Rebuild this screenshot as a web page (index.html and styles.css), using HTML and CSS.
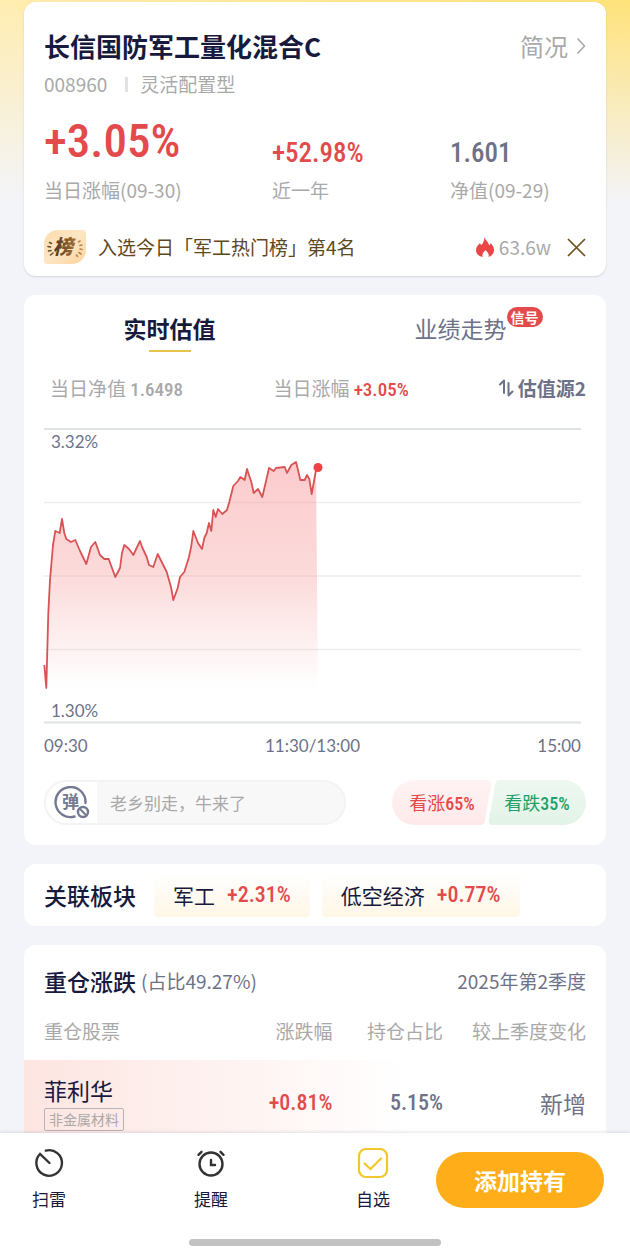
FILE: index.html
```html
<!DOCTYPE html>
<html lang="zh-CN">
<head>
<meta charset="utf-8">
<meta name="viewport" content="width=device-width, initial-scale=1">
<title>长信国防军工量化混合C</title>
<link rel="stylesheet" href="styles.css">
</head>
<body>
<div class="app">
  <main class="content">
    <section class="card summary">
      <div class="summary-head">
        <h1 class="fund-name">长信国防军工量化混合C</h1>
        <a class="profile-link" href="#profile">简况
          <svg width="10" height="18" viewBox="0 0 10 18" fill="none" stroke="currentColor" stroke-width="1.6" aria-hidden="true"><path d="M1.500 1.500 L8.500 9 L1.500 16.500"/></svg>
        </a>
      </div>
      <p class="fund-meta"><span>008960</span><span class="divider"></span><span>灵活配置型</span></p>
      <dl class="stats">
        <div class="stat"><dt>当日涨幅(09-30)</dt><dd class="num stat-big up">+3.05%</dd></div>
        <div class="stat"><dt>近一年</dt><dd class="num up">+52.98%</dd></div>
        <div class="stat"><dt>净值(09-29)</dt><dd class="num slate">1.601</dd></div>
      </dl>
      <div class="rank">
        <svg class="rank-badge" width="42" height="34" viewBox="0 0 42 34" aria-hidden="true">
          <defs><linearGradient id="badge" x1="0" y1="0" x2="1" y2="1"><stop offset="0" stop-color="#fbdcb0"/><stop offset=".5" stop-color="#fde6c4"/><stop offset="1" stop-color="#fad39c"/></linearGradient>
          <linearGradient id="ink" x1="0" y1="0" x2="1" y2="0"><stop offset="0" stop-color="#49351f"/><stop offset="1" stop-color="#a87032"/></linearGradient></defs>
          <path d="M14 0H39a3 3 0 0 1 3 3V20a14 14 0 0 1-14 14H3a3 3 0 0 1-3-3V14A14 14 0 0 1 14 0Z" fill="url(#badge)"/>
          <g fill="none" stroke-width="1.600" stroke-linecap="round">
            <path stroke="#6b4d2b" d="M5.500 12.500l2 1M4 16.500l2.500.5M4.500 21l2.500-.5M6.500 25l2.500-2"/>
            <path stroke="#b98850" d="M34.500 12l1.500-1M36 15.500l2-.5M36 19l2 .5M35 22.500l2 1.500M32.500 25l1 1.500"/>
          </g>
          <text class="badge-text" x="9" y="24" fill="url(#ink)">榜</text>
        </svg>
        <a class="rank-text" href="#rank">入选今日「军工热门榜」第4名</a>
        <span class="heat">
          <svg width="18" height="20" viewBox="0 0 18 20" aria-hidden="true"><path fill="#ec4545" d="M8.200 0C9 3 13 5 13 8.500c.8-.4 1.300-1.200 1.500-2.200C16.500 8 18 10.200 18 13c0 3.300-2.200 6-5.500 7 .8-2.600-.3-4.700-3.200-6.800-2.300 2.100-3.500 4.300-2.600 6.800C3 19.300 0 16.800 0 13.200c0-3.300 2.300-5 4-7.100.3.900.6 1.600 1.200 2C7.500 6 8.500 3.500 8.200 0Z"/></svg>
          63.6w
        </span>
        <button class="icon-button" type="button" aria-label="关闭">
          <svg width="19" height="19" viewBox="0 0 19 19" fill="none" stroke="#6f5220" stroke-width="1.700" aria-hidden="true"><path d="M1 1L18 18M18 1L1 18"/></svg>
        </button>
      </div>
    </section>

    <section class="card valuation">
      <div class="tabs" role="tablist">
        <button class="tab tab-active" type="button" role="tab" aria-selected="true">实时估值</button>
        <button class="tab" type="button" role="tab" aria-selected="false"><span class="tab-label">业绩走势<span class="signal">信号</span></span></button>
      </div>
      <div class="quote">
        <span>当日净值 <b class="num">1.6498</b></span>
        <span>当日涨幅 <b class="num up">+3.05%</b></span>
        <button class="source" type="button">
          <svg width="15" height="18" viewBox="0 0 15 18" fill="none" stroke="currentColor" stroke-width="2" stroke-linecap="round" stroke-linejoin="round" aria-hidden="true"><path d="M1 5.500L5 1.500V14M9.500 4V16.500L13.500 12.500"/></svg>估值源2</button>
      </div>
      <div class="chart">
        <div class="plot">
          <svg class="plot-svg" viewBox="44 429 537 294" role="img" aria-label="实时估值走势">
            <defs><linearGradient id="area" gradientUnits="userSpaceOnUse" x1="0" y1="462" x2="0" y2="688"><stop offset="0" stop-color="#f98d90" stop-opacity=".46"/><stop offset=".5" stop-color="#f7a3a3" stop-opacity=".4"/><stop offset="1" stop-color="#f7a3a3" stop-opacity="0"/></linearGradient></defs>
            <path fill="none" stroke="#eceeee" stroke-width="1.500" d="M44 502.500H581M44 576H581M44 649.500H581"/>
            <path fill="none" stroke="#dfe3e3" stroke-width="2" d="M44 429H581M44 722.500H581"/>
            <path fill="url(#area)" d="M44.300 665L46.300 688L48.300 613L50 580L53 545L55.300 531L59.700 533L62 519L64.300 533L66.300 539L71 542L75.300 540L80 551L86.300 564L91 547L95.300 542L100 555L104.300 559L108.700 559L115.300 577L120 568L122 553L124.300 545L129 549L133.300 555L140 541L142 547L146.700 557L149 565L153.300 567L157.700 554L166.700 572L171 587L173.300 600L177.700 588L180 577L184.300 572L189 557L191.300 546L193.300 531L198 543L202 549L204.300 538L206.700 533L209 523L211.300 531L213.300 510L215.700 517L218 509L222.300 514L227 510L229.300 502L233.300 486L238 481L240.300 477L244.700 480L247 469L251.300 482L253.700 493L258 489L262.300 497L267 477L269 468L273.700 471L276 468L284.700 467L287 473L291.300 465L296 462L298 470L300.300 480L304.700 480L307 475L309.300 479L311.700 494L316 470L318 688H46Z"/>
            <path fill="none" stroke="#d95355" stroke-width="1.800" stroke-linejoin="round" d="M44.300 665L46.300 688L48.300 613L50 580L53 545L55.300 531L59.700 533L62 519L64.300 533L66.300 539L71 542L75.300 540L80 551L86.300 564L91 547L95.300 542L100 555L104.300 559L108.700 559L115.300 577L120 568L122 553L124.300 545L129 549L133.300 555L140 541L142 547L146.700 557L149 565L153.300 567L157.700 554L166.700 572L171 587L173.300 600L177.700 588L180 577L184.300 572L189 557L191.300 546L193.300 531L198 543L202 549L204.300 538L206.700 533L209 523L211.300 531L213.300 510L215.700 517L218 509L222.300 514L227 510L229.300 502L233.300 486L238 481L240.300 477L244.700 480L247 469L251.300 482L253.700 493L258 489L262.300 497L267 477L269 468L273.700 471L276 468L284.700 467L287 473L291.300 465L296 462L298 470L300.300 480L304.700 480L307 475L309.300 479L311.700 494L316 470L318 468"/>
            <circle cx="318" cy="467.500" r="4.500" fill="#ee4446"/>
          </svg>
          <span class="scale scale-top">3.32%</span>
          <span class="scale scale-bottom">1.30%</span>
        </div>
        <div class="times"><span>09:30</span><span>11:30/13:00</span><span>15:00</span></div>
      </div>
      <div class="actions">
        <div class="comment">
          <button class="comment-toggle" type="button" aria-label="关闭弹幕">
            <svg width="36" height="34" viewBox="0 0 36 34" fill="none" stroke="#737990" aria-hidden="true">
              <path stroke-width="2.400" stroke-linecap="round" d="M20.500 30.500A15 15 0 1 1 31.500 17"/>
              <text class="toggle-text" x="8" y="22" fill="#737990" stroke="none">弹</text>
              <circle cx="29" cy="26" r="5" stroke-width="2.400"/><path stroke-width="2" d="M26 23L32 29"/>
            </svg>
          </button>
          <input class="comment-input" type="text" aria-label="发弹幕" placeholder="老乡别走，牛来了">
        </div>
        <div class="vote">
          <button class="vote-up" type="button">看涨<b class="num">65%</b></button>
          <button class="vote-down" type="button">看跌<b class="num">35%</b></button>
        </div>
      </div>
    </section>

    <section class="card sectors">
      <h2 class="heading">关联板块</h2>
      <a class="chip" href="#defence">军工<b class="num up">+2.31%</b></a>
      <a class="chip" href="#low-altitude">低空经济<b class="num up">+0.77%</b></a>
    </section>

    <section class="card holdings">
      <div class="holdings-head">
        <h2 class="heading">重仓涨跌</h2><span class="share">(占比49.27%)</span><span class="quarter">2025年第2季度</span>
      </div>
      <table class="table">
        <thead><tr><th class="c-name">重仓股票</th><th class="c-change">涨跌幅</th><th class="c-share">持仓占比</th><th class="c-diff">较上季度变化</th></tr></thead>
        <tbody><tr>
          <td class="c-name"><div class="stock">菲利华</div><span class="tag">非金属材料</span></td>
          <td class="num up">+0.81%</td><td class="num slate">5.15%</td><td class="c-diff slate">新增</td>
        </tr></tbody>
      </table>
    </section>
  </main>

  <footer class="bottom">
    <div class="bar">
      <nav class="nav">
        <button class="nav-item" type="button">
          <svg width="32" height="32" viewBox="0 0 32 32" fill="none" stroke="#333" stroke-width="2.400" stroke-linecap="round" aria-hidden="true"><path d="M12.800 3.600A12.800 12.800 0 1 1 7 7L16.500 16"/></svg>扫雷</button>
        <button class="nav-item" type="button">
          <svg width="32" height="32" viewBox="0 0 32 32" fill="none" stroke="#333" stroke-width="2.400" stroke-linecap="round" aria-hidden="true"><circle cx="16" cy="17" r="11.500"/><path d="M16 13V18H20M3.500 7.800L6.500 4.800M28.500 7.800L25.500 4.800"/></svg>提醒</button>
        <button class="nav-item" type="button">
          <svg width="32" height="32" viewBox="0 0 32 32" fill="none" stroke="#f2c72c" stroke-width="2.200" stroke-linecap="round" aria-hidden="true"><rect x="2" y="2" width="28" height="28" rx="7"/><path d="M7.500 16.500L13.500 22L24 11.500"/></svg>自选</button>
      </nav>
      <button class="primary" type="button">添加持有</button>
    </div>
    <div class="home-indicator"></div>
  </footer>
</div>
</body>
</html>
```
FILE: styles.css
```css
* { box-sizing: border-box; }

body {
  margin: 0;
  color: #171a3d;
  background: #f3f4fa;
  font-family: "Noto Sans CJK SC", sans-serif;
  font-size: 19px;
  line-height: 28px;
}

h1, h2, p, dl, dd { margin: 0; }
a { color: inherit; text-decoration: none; }
svg { flex: none; }

button, input {
  padding: 0;
  border: 0;
  color: inherit;
  background: none;
  font: inherit;
}

.num {
  font-family: "Roboto Condensed", "Liberation Sans Narrow", "Noto Sans CJK SC", sans-serif;
  font-weight: 500;
}

.up { color: #e34a4c; }
.slate { color: #6d7288; }

.app {
  display: flex;
  flex-direction: column;
  height: 100vh;
}

.content {
  flex: 1;
  min-height: 0;
  padding: 2px 24px 0;
  overflow: hidden;
  background:
    linear-gradient(to bottom, rgba(243, 244, 250, 0), #f3f4fa 205px),
    linear-gradient(to right, #ffedb0, #ffe27a);
}

.card {
  margin-bottom: 19px;
  border-radius: 12px;
  background: #fff;
}

/* Fund summary */
.summary {
  padding: 22px 20px 12px;
  box-shadow: 0 1px 2px rgba(40, 40, 80, 0.16);
}

.summary-head {
  display: flex;
  align-items: center;
  justify-content: space-between;
}

.fund-name {
  font-size: 26px;
  font-weight: 700;
  line-height: 44px;
}

.profile-link {
  display: flex;
  align-items: center;
  gap: 8px;
  color: #a9a9a9;
  font-size: 24px;
}

.fund-meta {
  display: flex;
  align-items: center;
  color: #a9a9a9;
  line-height: 32px;
}

.divider {
  width: 3px;
  height: 15px;
  margin: 0 12px 0 18px;
  background: #e2e2e2;
}

.stats {
  display: grid;
  grid-template-columns: 228fr 178fr 136fr;
  margin-top: 15px;
}

.stat {
  display: flex;
  flex-direction: column-reverse;
  gap: 9px;
}

.stat dt { color: #a9a9a9; }
.stat dd { font-size: 27px; line-height: 28px; }
.stat .stat-big { font-size: 47px; line-height: 52px; }

.rank {
  display: flex;
  align-items: center;
  margin-top: 26px;
}

.badge-text { font-size: 20px; font-weight: 900; font-style: italic; }

.rank-text {
  margin-left: 12px;
  color: #60471c;
}

.heat {
  display: flex;
  align-items: center;
  gap: 5px;
  margin-left: auto;
  color: #a9a9a9;
}

.icon-button {
  display: flex;
  margin-left: 16px;
}

/* Valuation */
.valuation { padding: 16px 0 20px; }

.tabs {
  display: grid;
  grid-template-columns: 1fr 1fr;
}

.tab {
  display: flex;
  flex-direction: column;
  align-items: center;
  gap: 5px;
  height: 41px;
  color: #6d7288;
  font-size: 23px;
  line-height: 34px;
}

.tab-active {
  color: #171a3d;
  font-weight: 700;
}

.tab-active::after {
  width: 42px;
  height: 2px;
  background: #e8c24a;
  content: "";
}

.tab-label { position: relative; }

.signal {
  position: absolute;
  top: -4px;
  left: 100%;
  padding: 0 4px;
  border-radius: 10px;
  color: #fff;
  background: #e34a4c;
  font-size: 14px;
  font-weight: 700;
  line-height: 20px;
  white-space: nowrap;
}

.quote {
  display: grid;
  grid-template-columns: 223fr 225fr auto;
  margin: 22px 20px 0 26px;
  color: #a9a9a9;
}

.quote .num { line-height: 20px; }

.source {
  display: flex;
  align-items: center;
  gap: 4px;
  height: 28px;
  color: #6d7288;
  font-weight: 700;
}

.chart {
  margin: 27px 25px 0 20px;
  color: #6d7288;
  font-family: Lato, sans-serif;
  font-size: 17px;
}

.plot { position: relative; }
.plot-svg { display: block; width: 100%; overflow: visible; }

.scale {
  position: absolute;
  left: 7px;
  line-height: 24px;
}

.scale-top { top: 1px; }
.scale-bottom { bottom: 0; }

.times {
  display: flex;
  justify-content: space-between;
  margin-top: 10px;
  line-height: 26px;
}

.actions {
  display: flex;
  justify-content: space-between;
  height: 45px;
  margin: 21px 20px 0;
}

.comment {
  display: flex;
  flex: 0 1 302px;
  overflow: hidden;
  border: 2px solid #f3f3f3;
  border-radius: 23px;
  background: #f8f8f8;
}

.comment-toggle {
  display: flex;
  flex: none;
  align-items: center;
  justify-content: center;
  width: 51px;
  background: #fff;
}

.toggle-text { font-size: 17px; font-weight: 700; }

.comment-input {
  flex: 1;
  min-width: 0;
  padding: 0 13px;
  font-size: 17px;
}

.comment-input::placeholder { color: #a9a9a9; opacity: 1; }

.vote {
  display: grid;
  grid-template-columns: 96px 94px;
  gap: 4px;
  overflow: hidden;
  border-radius: 23px;
  font-size: 18px;
}

.vote button {
  position: relative;
  isolation: isolate;
  white-space: nowrap;
}

.vote button::before {
  position: absolute;
  inset: 0;
  z-index: -1;
  border-radius: 4px;
  transform: skewX(-10deg);
  content: "";
}

.vote .vote-up { padding-left: 4px; color: #e34a4c; }
.vote .vote-down { padding-right: 4px; color: #23a068; }
.vote .vote-up::before { left: -24px; background: linear-gradient(#fff3f3, #fee9ea); }
.vote .vote-down::before { right: -24px; background: linear-gradient(#eef8f1, #e3f3e7); }

/* Related sectors */
.sectors {
  display: flex;
  align-items: center;
  gap: 12px;
  height: 62px;
  padding: 0 20px;
}

.heading {
  font-size: 23px;
  font-weight: 500;
  line-height: 32px;
  white-space: nowrap;
}

.chip {
  display: flex;
  align-items: center;
  gap: 12px;
  height: 44px;
  padding: 0 19px;
  border-radius: 4px;
  background: linear-gradient(#fff, #fff6e6);
  font-size: 21px;
  white-space: nowrap;
}

.chip .num { font-size: 22px; }
.heading + .chip { margin-left: 6px; }

/* Holdings */
.holdings { padding-top: 20px; }

.holdings-head {
  display: flex;
  align-items: center;
  gap: 5px;
  padding: 0 20px;
  color: #6d7288;
}

.holdings-head .heading { color: #171a3d; }
.quarter { margin-left: auto; }

.table {
  width: 100%;
  margin-top: 5px;
  border-collapse: collapse;
  table-layout: fixed;
  text-align: right;
}

.table th {
  height: 58px;
  padding: 0;
  color: #a9a9a9;
  font-weight: 400;
}

.table td { padding: 14px 0; font-size: 23px; }
.table td.num { font-size: 22px; }
.table .c-name { width: 35%; padding-left: 20px; text-align: left; }
.table .c-diff { width: 28%; padding-right: 20px; }
.c-share { width: 19%; }
.table tbody tr { background: linear-gradient(to right, #fde5e1, #fff 66%); }
.stock { line-height: 32px; }

.tag {
  display: block;
  width: max-content;
  margin-top: 2px;
  padding: 0 4px;
  border: 1px solid #b9b3b5;
  border-radius: 2px;
  color: #a9a9a9;
  font-size: 14px;
  line-height: 21px;
}

/* Bottom bar */
.bottom {
  position: relative;
  padding: 14px 26px 13px;
  background: #fff;
  box-shadow: 0 -1px 3px rgba(40, 40, 80, 0.12);
}

.bar {
  display: flex;
  align-items: center;
  gap: 46px;
  padding-left: 6px;
}

.nav {
  display: flex;
  flex: 1;
  justify-content: space-between;
}

.nav-item {
  display: flex;
  flex-direction: column;
  align-items: center;
  gap: 6px;
  width: 34px;
  font-size: 17px;
  white-space: nowrap;
}

.primary {
  width: 168px;
  height: 56px;
  border-radius: 28px;
  color: #fff;
  background: #ffae19;
  font-size: 23px;
  font-weight: 700;
}

.home-indicator {
  width: 252px;
  max-width: 60%;
  height: 7px;
  margin: 26px auto 0;
  border-radius: 4px;
  background: #c2c2c2;
}
```
